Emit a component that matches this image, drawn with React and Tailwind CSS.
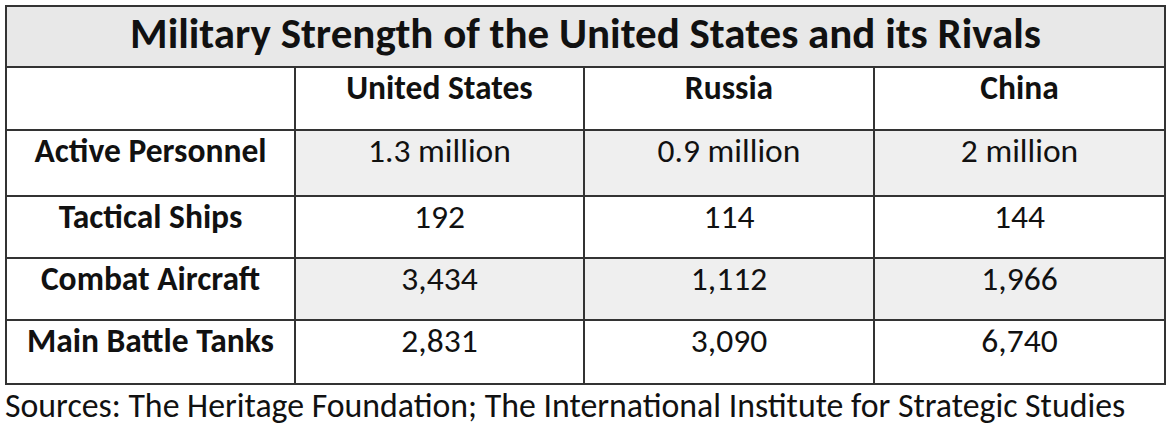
import React from "react";

const rows = [
  { label: "Active Personnel", vals: ["1.3 million", "0.9 million", "2 million"], shade: true, h: "h-[66px]" },
  { label: "Tactical Ships", vals: ["192", "114", "144"], shade: false, h: "h-[62px]" },
  { label: "Combat Aircraft", vals: ["3,434", "1,112", "1,966"], shade: true, h: "h-[62px]" },
  { label: "Main Battle Tanks", vals: ["2,831", "3,090", "6,740"], shade: false, h: "h-[64px]" },
];

export default function App() {
  return (
    <div
      className="w-[1170px] h-[426px] bg-white pt-[5px] pl-[5px] text-[#111] overflow-hidden"
      style={{ fontFamily: "Carlito, Calibri, 'Liberation Sans', sans-serif" }}
    >
      <table className="w-[1159px] table-fixed border-collapse">
        <colgroup>
          <col className="w-[289px]" />
          <col className="w-[289px]" />
          <col className="w-[290px]" />
          <col className="w-[291px]" />
        </colgroup>
        <tbody>
          <tr className="h-[61px]">
            <td
              colSpan={4}
              className="border-2 border-[#333] bg-[#e8e8e8] text-center align-middle text-[43px] font-bold leading-[1.22] pb-[4px]"
            >
              Military Strength of the United States and its Rivals
            </td>
          </tr>
          <tr className="h-[63px]">
            <td className="border-2 border-[#333] bg-white"></td>
            <td className="border-2 border-[#333] bg-white text-center align-top text-[33.5px] font-bold leading-[1.22]">United States</td>
            <td className="border-2 border-[#333] bg-white text-center align-top text-[33.5px] font-bold leading-[1.22]">Russia</td>
            <td className="border-2 border-[#333] bg-white text-center align-top text-[33.5px] font-bold leading-[1.22]">China</td>
          </tr>
          {rows.map((r) => (
            <tr key={r.label} className={r.h}>
              <td className="border-2 border-[#333] bg-white text-center align-top text-[33.5px] font-bold leading-[1.22]">
                {r.label}
              </td>
              {r.vals.map((v, i) => (
                <td
                  key={i}
                  className={
                    r.shade
                      ? "border-2 border-[#333] bg-[#efefef] text-center align-top text-[33.5px] leading-[1.22]"
                      : "border-2 border-[#333] bg-white text-center align-top text-[33.5px] leading-[1.22]"
                  }
                >
                  {v}
                </td>
              ))}
            </tr>
          ))}
        </tbody>
      </table>
      <div className="text-[33.8px] leading-[1.22] whitespace-nowrap">
        Sources: The Heritage Foundation; The International Institute for Strategic Studies
      </div>
    </div>
  );
}
